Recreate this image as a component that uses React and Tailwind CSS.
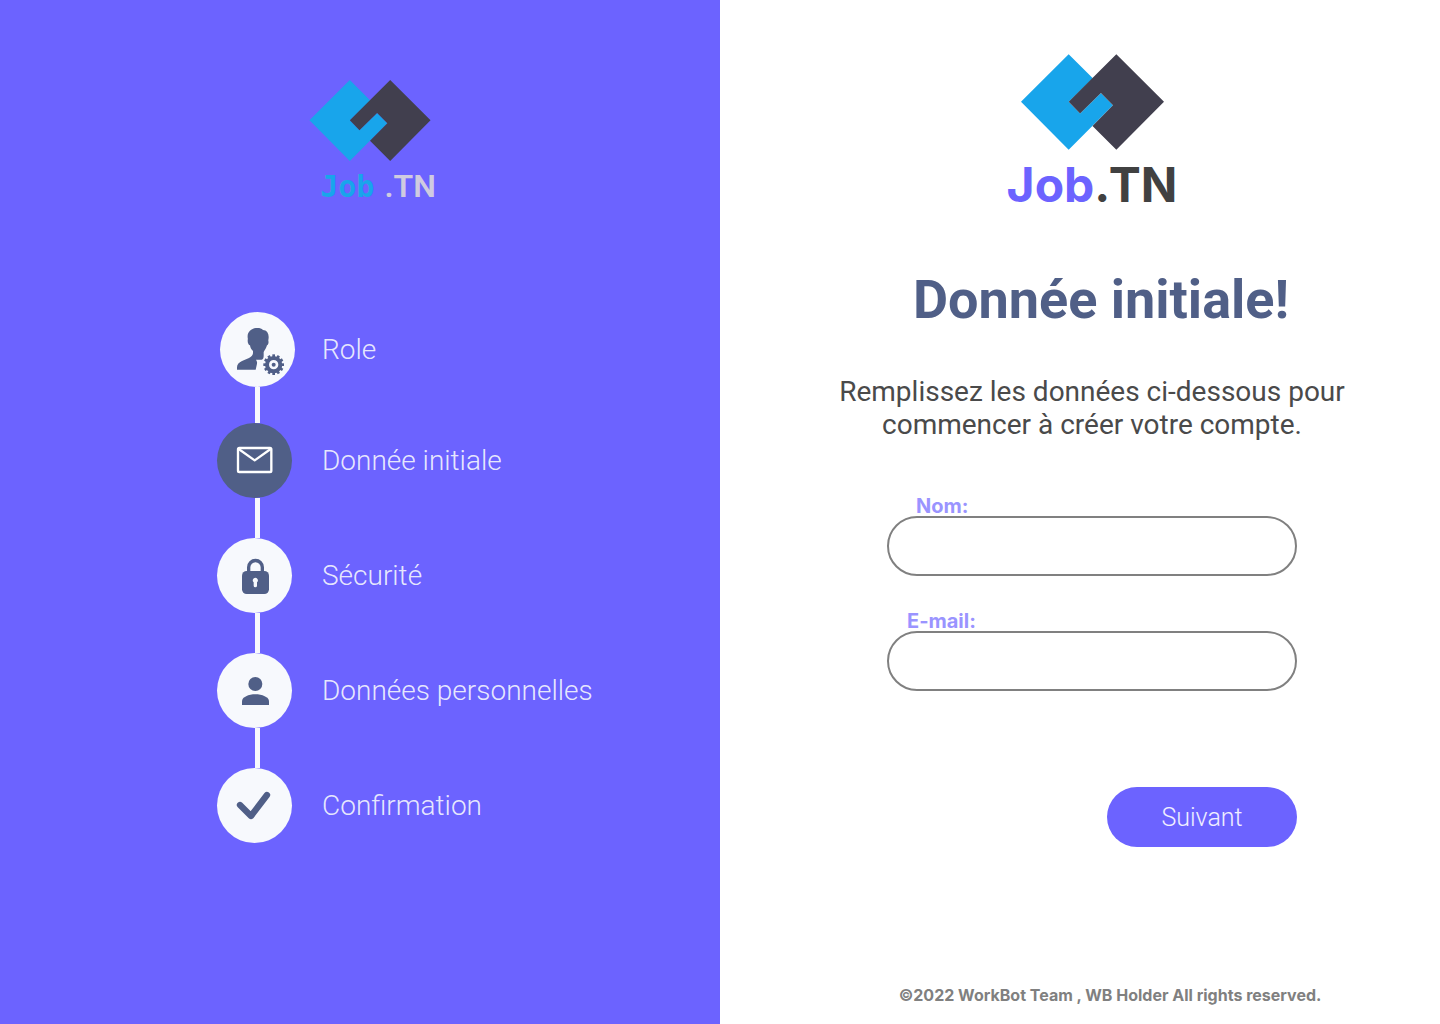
import React from "react";

const INK = "#505f87";

function Mark({ className }) {
  return (
    <svg viewBox="94 43 426 285" className={className} aria-hidden="true">
      <path
        fill="#18a5eb"
        d="M94 185 236 43l72 72-72 70 34 35 62-61 36 36-132 133z"
      />
      <path
        fill="#413f4e"
        d="M236 185 378 43l142 142-142 143-71-71 61-62-36-36-62 61z"
      />
    </svg>
  );
}

function RoleIcon() {
  const teeth = Array.from({ length: 12 }, (_, i) => i * 30);
  return (
    <svg viewBox="60 36 225 225" className="size-full" aria-hidden="true">
      <g fill={INK}>
        <path d="M111 209v-7c0-9 6-15 15-19l21-9c7-3 11-7 12-14v-7c-5-4-8-10-9-17-4-1-7-7-7-14 0-3 1-5 0-9-2-17 11-29 29-29 8 0 13 2 17 6 11 0 17 10 17 21 0 5-1 8-1 11 2 7-1 12-4 14-2 8-6 13-10 20v12c0 6-2 10-6 11h-17c2 4 4 6 3 12l-4 18z" />
        {teeth.map((a) => (
          <rect
            key={a}
            x="217"
            y="163"
            width="8"
            height="12"
            transform={`rotate(${a} 221 194)`}
          />
        ))}
        <circle cx="221" cy="194" r="6" />
      </g>
      <circle cx="221" cy="194" r="20" fill="none" stroke={INK} strokeWidth="12" />
    </svg>
  );
}

function MailIcon() {
  return (
    <svg viewBox="51 369 225 225" className="size-full" aria-hidden="true">
      <g fill="none" stroke="#fff" strokeWidth="7" strokeLinejoin="round">
        <rect x="114" y="444" width="100" height="72" rx="4" />
        <path d="m116 447 48 34 48-34" />
      </g>
    </svg>
  );
}

function LockIcon() {
  return (
    <svg viewBox="51 24 225 225" className="size-full" aria-hidden="true">
      <rect x="126" y="123" width="81" height="69" rx="14" fill={INK} />
      <path d="M146 126v-14a20 20 0 0 1 41 0v14" fill="none" stroke={INK} strokeWidth="10" />
      <path d="M166 143a8 8 0 0 1 5 14v10a5 5 0 0 1-10 0v-10a8 8 0 0 1 5-14z" fill="#f7f9fd" />
    </svg>
  );
}

function UserIcon() {
  return (
    <svg viewBox="51 369 225 225" className="size-full" aria-hidden="true">
      <g fill={INK}>
        <circle cx="166" cy="462" r="21" />
        <path d="M126 525v-11c0-13 20-21 40-21s41 8 41 21v11z" />
      </g>
    </svg>
  );
}

function CheckIcon() {
  return (
    <svg viewBox="51 144 225 225" className="size-full" aria-hidden="true">
      <path
        d="m120 255 33 33 48-63"
        fill="none"
        stroke={INK}
        strokeWidth="19"
        strokeLinecap="round"
        strokeLinejoin="round"
      />
    </svg>
  );
}

const steps = [
  { label: "Role", Icon: RoleIcon, circle: "justify-self-end bg-[#f7f9fd]", link: "h-9" },
  { label: "Donnée initiale", Icon: MailIcon, circle: "bg-[#505f87]", link: "h-10", current: true },
  { label: "Sécurité", Icon: LockIcon, circle: "bg-[#f7f9fd]", link: "h-10" },
  { label: "Données personnelles", Icon: UserIcon, circle: "bg-[#f7f9fd]", link: "h-10" },
  { label: "Confirmation", Icon: CheckIcon, circle: "bg-[#f7f9fd]" },
];

function Field({ id, label, type, labelClass }) {
  return (
    <div className="flex flex-col items-start">
      <label
        htmlFor={id}
        className={`font-['Inter',sans-serif] text-xl leading-5 font-bold text-[#9a94ff] [font-optical-sizing:none] ${labelClass}`}
      >
        {label}
      </label>
      <input
        id={id}
        name={id}
        type={type}
        className="h-[60px] w-full rounded-full border-2 border-[#808080] bg-white px-7 text-xl text-[#414141] outline-none"
      />
    </div>
  );
}

export default function App() {
  return (
    <div className="grid min-h-screen grid-cols-2 bg-white font-['Roboto',sans-serif]">
      <aside className="bg-[#6c63ff] pt-20">
        <div className="flex flex-col items-center pl-5">
          <Mark className="h-[81px] w-[122px]" />
          <p className="mt-2 flex gap-2.5 pl-4 leading-9">
            <span className="font-['DejaVu_Sans_Mono',monospace] text-3xl leading-9 font-bold text-[#18a5eb]">Job</span>
            <span className="text-[32px] leading-[34px] font-semibold text-[#cfcbe0]">.TN</span>
          </p>
        </div>
        <ol className="mt-[107px] pl-[217px]">
          {steps.map(({ label, Icon, circle, link, current }) => (
            <li
              key={label}
              aria-current={current ? "step" : undefined}
              className="grid grid-cols-[78px_1fr] items-center gap-x-[27px]"
            >
              <span className={`size-[75px] rounded-full ${circle}`}>
                <Icon />
              </span>
              <span className="text-[28px] leading-8 font-light text-[#f7f9fd]/90">{label}</span>
              {link && <span className={`ml-[38px] w-[5px] bg-[#f7f9fd] ${link}`} />}
            </li>
          ))}
        </ol>
      </aside>

      <main className="flex flex-col items-center pt-[54px] pl-6">
        <Mark className="h-24 w-[143px]" />
        <p className="mt-[5px] font-['Inter',sans-serif] text-5xl leading-[60px] font-bold text-[#414141] [font-optical-sizing:none]">
          <span className="text-[#6c63ff]">Job</span>.TN
        </p>
        <h1 className="mt-[53px] pl-[18px] text-[54px] leading-[64px] font-bold text-[#505f87]">
          Donnée initiale!
        </h1>
        <p className="mt-[43px] w-[520px] text-center text-[28px] leading-[33px] text-[#4a4a4a]">
          Remplissez les données ci-dessous pour commencer à créer votre compte.
        </p>
        <form className="mt-[55px] flex w-[410px] flex-col" onSubmit={(e) => e.preventDefault()}>
          <div className="flex flex-col gap-[35px]">
            <Field id="nom" label="Nom:" type="text" labelClass="ml-[29px]" />
            <Field id="email" label="E-mail:" type="email" labelClass="ml-5" />
          </div>
          <button
            type="submit"
            className="mt-24 h-[60px] w-[190px] self-end rounded-full bg-[#6c63ff] pt-0.5 text-[25px] font-light text-white/90"
          >
            Suivant
          </button>
        </form>
        <footer className="mt-auto pb-[19px] pl-9 font-['Inter',sans-serif] text-base leading-5 font-bold text-[#808080]">
          ©2022 WorkBot Team , WB Holder All rights reserved.
        </footer>
      </main>
    </div>
  );
}
